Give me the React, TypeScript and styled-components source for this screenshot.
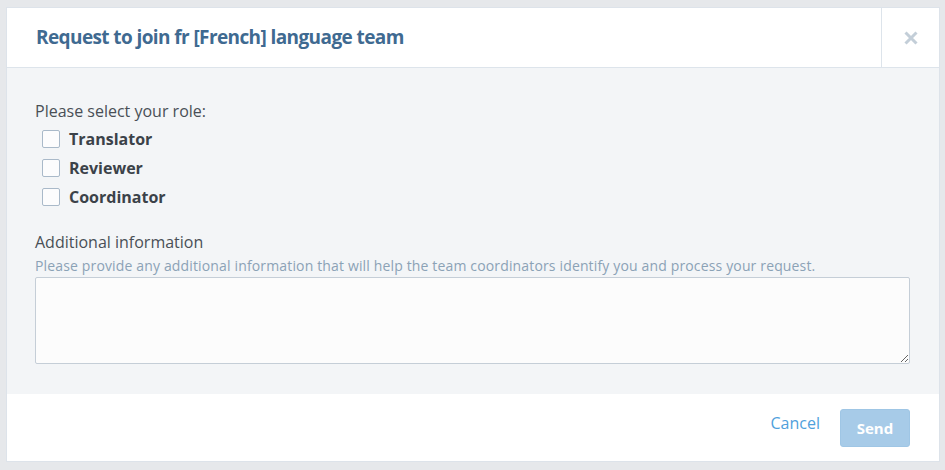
import React from "react";
import styled, { createGlobalStyle } from "styled-components";

const Global = createGlobalStyle`
  html, body {
    margin: 0;
    padding: 0;
    background: #e6e8eb;
    font-family: "Open Sans", "Liberation Sans", sans-serif;
  }
  * { box-sizing: border-box; }
`;

const Page = styled.div`
  width: 945px;
  height: 470px;
  padding: 7px 5px 0 6px;
`;

const Modal = styled.div`
  width: 934px;
  height: 455px;
  background: #fff;
  border: 1px solid #dde3ea;
  display: flex;
  flex-direction: column;
`;

const Header = styled.div`
  height: 60px;
  flex-shrink: 0;
  display: flex;
  border-bottom: 1px solid #dde4eb;
`;

const Title = styled.h2`
  flex: 1;
  margin: 0;
  padding: 0 0 2px 29px;
  display: flex;
  align-items: center;
  font-size: 19px;
  font-weight: 700;
  color: #3f6a91;
  letter-spacing: -0.6px;
`;

const Close = styled.button`
  width: 58px;
  border: none;
  border-left: 1px solid #dde4eb;
  background: transparent;
  display: flex;
  align-items: center;
  justify-content: center;
  padding: 0;
  cursor: pointer;
`;

const Body = styled.div`
  height: 326px;
  flex-shrink: 0;
  background: #f3f5f7;
  padding: 31px 28px 0 28px;
`;

const Label = styled.div`
  font-size: 16px;
  color: #494f56;
  line-height: 24px;
`;

const RoleList = styled.div`
  display: flex;
  flex-direction: column;
  padding: 7px 0 0 7px;
  gap: 11px;
`;

const Role = styled.label`
  display: flex;
  align-items: center;
  gap: 9px;
  font-size: 16px;
  font-weight: 700;
  color: #3b4249;
  height: 18px;
`;

const Box = styled.span`
  width: 18px;
  height: 18px;
  border: 1px solid #a9b9c9;
  border-radius: 2px;
  background: #fcfcfd;
`;

const Section = styled.div`
  margin-top: 24px;
`;

const Hint = styled.div`
  font-size: 14px;
  color: #8ba2b6;
  line-height: 20px;
  margin-top: 2px;
  letter-spacing: 0.15px;
`;

const TextArea = styled.textarea`
  display: block;
  width: 875px;
  height: 87px;
  margin-top: 1px;
  border: 1px solid #c5ced7;
  border-radius: 2px;
  background: #fcfcfc;
  resize: vertical;
  font-family: inherit;
  font-size: 14px;
`;

const Footer = styled.div`
  flex: 1;
  display: flex;
  align-items: center;
  justify-content: flex-end;
  gap: 20px;
  padding: 0 29px 0 0;
`;

const LinkButton = styled.button`
  border: none;
  background: transparent;
  color: #4fa1dc;
  font-family: inherit;
  font-size: 16px;
  padding: 0;
  margin-top: -10px;
  cursor: pointer;
`;

const Primary = styled.button<{ disabled?: boolean }>`
  width: 70px;
  height: 38px;
  border: 1px solid #9fc6e5;
  border-radius: 3px;
  background: #a7cbe8;
  color: #fff;
  font-family: inherit;
  font-size: 15px;
  font-weight: 700;
  padding: 0;
  cursor: ${(p) => (p.disabled ? "default" : "pointer")};
`;

const roles = ["Translator", "Reviewer", "Coordinator"];

export default function App() {
  return (
    <>
      <Global />
      <Page>
        <Modal>
          <Header>
            <Title>Request to join fr [French] language team</Title>
            <Close aria-label="Close">
              <svg width="14" height="14" viewBox="0 0 14 14">
                <path d="M1.5 1.5 L12.5 12.5 M12.5 1.5 L1.5 12.5" stroke="#c3ced8" strokeWidth="3" />
              </svg>
            </Close>
          </Header>
          <Body>
            <Label>Please select your role:</Label>
            <RoleList>
              {roles.map((r) => (
                <Role key={r}>
                  <Box />
                  {r}
                </Role>
              ))}
            </RoleList>
            <Section>
              <Label>Additional information</Label>
              <Hint>
                Please provide any additional information that will help the team coordinators identify you and
                process your request.
              </Hint>
              <TextArea />
            </Section>
          </Body>
          <Footer>
            <LinkButton>Cancel</LinkButton>
            <Primary disabled>Send</Primary>
          </Footer>
        </Modal>
      </Page>
    </>
  );
}
